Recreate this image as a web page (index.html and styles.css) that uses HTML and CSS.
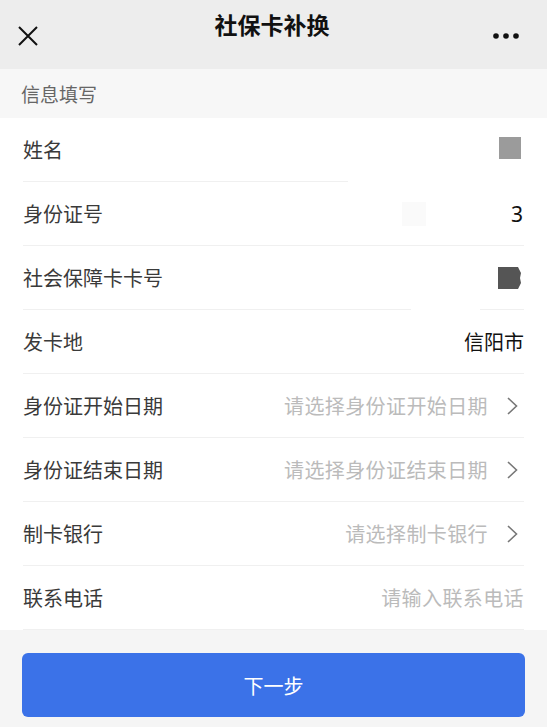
FILE: index.html
```html
<!DOCTYPE html>
<html lang="zh-CN">
<head>
<meta charset="utf-8">
<title>社保卡补换</title>
<link rel="stylesheet" href="styles.css">
</head>
<body>
<div class="page">
  <header class="topbar">
    <svg class="close" width="20" height="20" viewBox="0 0 20 20"><path d="M1 1 L19 19 M19 1 L1 19" stroke="#111" stroke-width="2" fill="none"/></svg>
    <h1 class="title">社保卡补换</h1>
    <svg class="more" width="30" height="8" viewBox="0 0 30 8"><circle cx="4" cy="4" r="2.8" fill="#111"/><circle cx="14" cy="4" r="2.8" fill="#111"/><circle cx="24" cy="4" r="2.8" fill="#111"/></svg>
  </header>
  <div class="section">信息填写</div>
  <div class="list">
    <div class="row cut-a">
      <span class="label">姓名</span>
      <span class="mask mask-gray"></span>
    </div>
    <div class="row">
      <span class="label">身份证号</span>
      <span class="value-group"><span class="mask-faint"></span><span class="value num">3</span></span>
    </div>
    <div class="row cut-b">
      <span class="label">社会保障卡卡号</span>
      <svg class="mask-dark" width="24" height="22" viewBox="0 0 24 22"><path d="M0 0 H20 L23 6 L22 11 L23 16 L20 22 H0 Z" fill="#555"/></svg>
    </div>
    <div class="row">
      <span class="label">发卡地</span>
      <span class="value">信阳市</span>
    </div>
    <div class="row">
      <span class="label">身份证开始日期</span>
      <span class="value-group"><span class="placeholder">请选择身份证开始日期</span><svg class="chev" width="17" height="18" viewBox="0 0 17 18"><path d="M1 1 L9.5 9 L1 17" stroke="#777" stroke-width="1.6" fill="none"/></svg></span>
    </div>
    <div class="row">
      <span class="label">身份证结束日期</span>
      <span class="value-group"><span class="placeholder">请选择身份证结束日期</span><svg class="chev" width="17" height="18" viewBox="0 0 17 18"><path d="M1 1 L9.5 9 L1 17" stroke="#777" stroke-width="1.6" fill="none"/></svg></span>
    </div>
    <div class="row">
      <span class="label">制卡银行</span>
      <span class="value-group"><span class="placeholder">请选择制卡银行</span><svg class="chev" width="17" height="18" viewBox="0 0 17 18"><path d="M1 1 L9.5 9 L1 17" stroke="#777" stroke-width="1.6" fill="none"/></svg></span>
    </div>
    <div class="row">
      <span class="label">联系电话</span>
      <span class="placeholder">请输入联系电话</span>
    </div>
  </div>
  <div class="footer">
    <button class="next">下一步</button>
  </div>
</div>
</body>
</html>
```

FILE: styles.css
```css
* { box-sizing: border-box; }
html, body { margin: 0; padding: 0; }
body {
  font-family: "Noto Sans CJK SC", "Noto Sans", sans-serif;
  background: #f5f5f5;
  width: 547px;
  height: 727px;
  overflow: hidden;
}
.page { display: flex; flex-direction: column; height: 727px; }
.topbar {
  height: 69px;
  background: #ededed;
  display: flex;
  align-items: center;
  justify-content: space-between;
  padding: 0 25px 0 18px;
}
.close { margin-top: 3px; }
.more { margin-top: 2px; }
.title {
  margin: 0;
  font-size: 23px;
  font-weight: 700;
  color: #111;
  margin-top: -22px;
  margin-left: 14px;
}
.section {
  height: 49px;
  background: #f7f7f7;
  display: flex;
  align-items: center;
  padding-left: 21px;
  font-size: 19px;
  color: #666;
}
.list {
  background: #fff;
  padding: 0 23px;
}
.row {
  height: 64px;
  display: flex;
  align-items: center;
  justify-content: space-between;
  border-bottom: 1px solid #f0f0f0;
}
.row.cut-a {
  border-bottom: 1px solid transparent;
  background: linear-gradient(#f0f0f0, #f0f0f0) no-repeat left bottom / 325px 1px;
  background-origin: border-box;
}
.row.cut-b {
  border-bottom: 1px solid transparent;
  background:
    linear-gradient(#f0f0f0, #f0f0f0) no-repeat left bottom / 388px 1px,
    linear-gradient(#f0f0f0, #f0f0f0) no-repeat right bottom / 44px 1px;
  background-origin: border-box;
}
.label { font-size: 20px; color: #3a3a3a; }
.value { font-size: 20px; color: #111; }
.value.num { font-family: "Noto Sans", "DejaVu Sans", sans-serif; font-size: 21px; margin-right: 1px; }
.placeholder { font-size: 20px; color: #bbb; letter-spacing: 0.4px; }
.value-group { display: flex; align-items: center; }
.chev { margin-left: 19px; }
.mask { display: block; width: 22px; height: 22px; margin-right: 3px; }
.mask-gray { background: #9b9b9b; margin-top: -4px; }
.mask-faint { display: block; width: 24px; height: 24px; background: #fafafa; margin-right: 85px; }
.mask-dark { margin-right: 2px; }
.footer {
  flex: 1;
  background: #f5f5f5;
  padding: 23px 22px 0 22px;
}
.next {
  width: 503px;
  height: 64px;
  border: none;
  border-radius: 6px;
  background: #3b72e8;
  color: #fff;
  font-family: "Noto Sans CJK SC", "Noto Sans", sans-serif;
  font-size: 20px;
  display: block;
}
```
